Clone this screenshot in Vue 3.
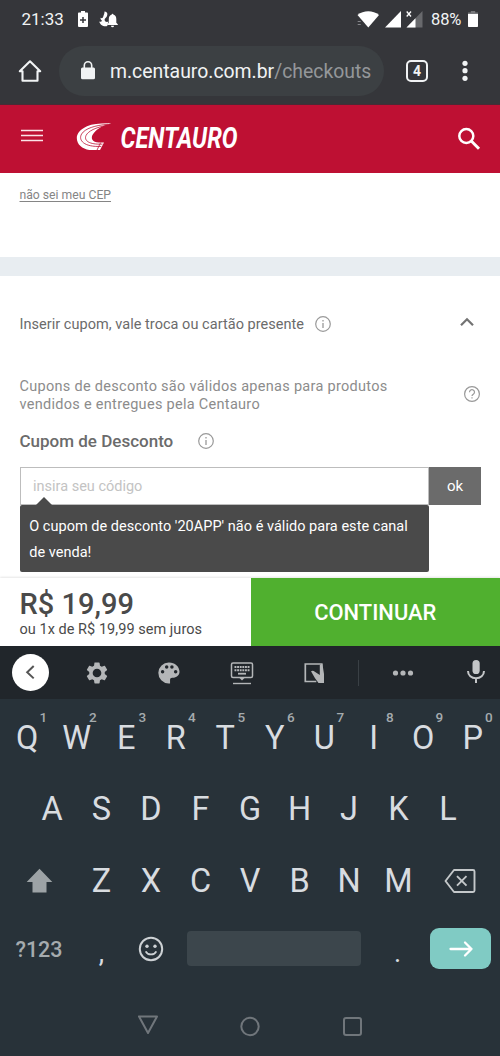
<script setup>
const row1 = 'QWERTYUIOP'.split('').map((letter, i) => ({ letter, hint: (i + 1) % 10 }))
const row2 = 'ASDFGHJKL'.split('')
const row3 = 'ZXCVBNM'.split('')
</script>

<template>
  <div class="screen">
    <div class="status">
      <span class="clock">21:33</span>
      <svg class="st-batt" width="10" height="18" viewBox="0 0 10 18">
        <path d="M3 1h4v1.6h2.2a.8.8 0 0 1 .8.8V16a1 1 0 0 1-1 1H1a1 1 0 0 1-1-1V3.400a.8.800 0 0 1 .8-.8H3z" fill="#fff" />
        <path d="M5 7v6M2 10h6" stroke="#35363a" stroke-width="1.500" />
      </svg>
      <svg class="st-bell" width="19" height="17" viewBox="0 0 19 17">
        <path d="M5.500.5C9 1 8.700 3.500 7.800 5.500 7 7 5.400 7.500 5.600 9c.2 1.800 2.200 2.400 3.800 1.600-.3 1.600-.8 3-1.200 4.400C4.500 16 .8 13.500.3 10.400c1.300.6 2.300.3 2.700-.7C2 9 1.300 8 1.600 6.800c1.400.8 2.300.2 2.600-1C4.600 4 5.600 2.600 5.500.5z" fill="#fff" />
        <path d="M13.500 2.800a1 1 0 0 1 1 1c2 .5 2.800 2.200 2.800 4.200v3.700l1.500 1.600v.7H8.300v-.7l1.500-1.600V8c0-2 .9-3.700 2.800-4.200a1 1 0 0 1 .9-1zM12 14.700h3a1.500 1.500 0 0 1-3 0z" fill="#fff" />
      </svg>
      <span class="grow"></span>
      <svg width="66" height="18" viewBox="0 0 66 18">
        <path d="M.5 5.100C6.600.100 15.900.1 22 5.100L11.300 17.500z" fill="#fff" />
        <path d="M.7 14.500h3M.7 11.500h3" stroke="#85868a" stroke-width="1.200" />
        <path d="M44 1v16.500H28z" fill="#fff" />
        <path d="M65.500 1v16.500H49.500z" fill="#68696c" />
        <path d="M58.500 8.200v9.300h-9z" fill="#fff" />
        <path d="M49.700 1.500l4.300 5M54 1.500l-4.300 5" stroke="#fff" stroke-width="1.300" />
      </svg>
      <span class="pct">88%</span>
      <svg class="st-full" width="10" height="18" viewBox="0 0 10 18">
        <path d="M2.800 1h4.400v1.500H10V5H0V2.500h2.800z" fill="#77787b" />
        <path d="M0 4h10v12.200a.8.8 0 0 1-.8.8H.8a.8.8 0 0 1-.8-.8z" fill="#fff" />
      </svg>
    </div>

    <div class="browser">
      <svg class="home" width="24" height="24" viewBox="0 0 24 24">
        <path d="M12 2.300L1.800 12.200H4.500v9.600h15v-9.600h2.700z" fill="none" stroke="#f1f3f4" stroke-width="2.100" stroke-linejoin="round" />
      </svg>
      <div class="url">
        <svg width="14" height="19" viewBox="0 0 14 19">
          <rect y="6.500" width="14" height="11.800" rx="1.500" fill="#f1f3f4" />
          <path d="M3.300 7V4.500a3.700 3.700 0 0 1 7.400 0V7" fill="none" stroke="#f1f3f4" stroke-width="1.600" />
        </svg>
        <span class="url-text">m.centauro.com.br<i>/checkouts</i></span>
      </div>
      <div class="tabs">4</div>
      <svg class="dots" width="6" height="22" viewBox="0 0 6 22">
        <g fill="#f1f3f4"><circle cx="3" cy="3.300" r="2.600" /><circle cx="3" cy="10.700" r="2.600" /><circle cx="3" cy="18.300" r="2.600" /></g>
      </svg>
    </div>

    <header class="site">
      <svg class="burger" width="24" height="14" viewBox="0 0 24 14">
        <path d="M1 1.500h22M1 6.500h22M1 11.500h22" stroke="#fbe3e8" stroke-width="1.500" />
      </svg>
      <svg class="logo" width="220" height="34" viewBox="0 0 220 34">
        <path d="M35.300 3.300C26 3 17 3.600 11 6.300 4.500 9.200.8 13.500.8 18c0 6.500 5.500 11 12.500 11.900 3.500.3 7 .1 10.700 0l4-7.400c-4 .2-8.500.200-10.500-1.500-3.500-3-1-7.500 3.500-11.200C24.500 7 29.500 5 35.300 3.300z" fill="#fff" />
        <path d="M32 4.300C19 5.300 9 8.500 5.600 14c-3.500 6 2 13.300 19.700 12.400M31 5.400C19.500 7.400 12.300 11 10 15.500c-2.200 5 3 9.300 16.500 8.600M20.800 30.500l3.800-7.800" fill="none" stroke="#be1033" stroke-width=".8" />
        <text x="44.500" y="27.700" textLength="117" lengthAdjust="spacingAndGlyphs" font-size="29.500" font-weight="700" font-style="italic" font-family="Roboto, sans-serif" fill="#fff">CENTAURO</text>
      </svg>
      <svg class="search" width="24" height="24" viewBox="0 0 24 24">
        <circle cx="9.300" cy="9" r="7" fill="none" stroke="#fff" stroke-width="2.500" />
        <path d="M14.300 14L22 21.700" stroke="#fff" stroke-width="3" />
      </svg>
    </header>

    <main>
      <div class="cep"><a>não sei meu CEP</a></div>
      <div class="band"></div>
      <section class="coupon">
        <div class="accordion">
          <span class="acc-title">Inserir cupom, vale troca ou cartão presente</span>
          <svg class="acc-info" width="18" height="18" viewBox="0 0 18 18">
            <circle cx="9" cy="9" r="7.300" fill="none" stroke="#999" stroke-width="1.200" />
            <path d="M9 5v1.600M9 8v5" stroke="#999" stroke-width="1.300" />
          </svg>
          <span class="grow"></span>
          <svg class="chevron" width="16" height="12" viewBox="0 0 16 12">
            <path d="M2 9.300L8 3.200l6 6.100" fill="none" stroke="#737373" stroke-width="2.200" />
          </svg>
        </div>
        <div class="notice">
          <p>Cupons de desconto são válidos apenas para produtos<br />vendidos e entregues pela Centauro</p>
          <svg width="18" height="18" viewBox="0 0 18 18">
            <circle cx="9" cy="9" r="7.400" fill="none" stroke="#999" stroke-width="1.200" />
            <path d="M6.500 7.200a2.500 2.500 0 1 1 3.800 2.100C9.400 9.900 9 10.200 9 11.100M9 12.200v1.400" fill="none" stroke="#999" stroke-width="1.200" />
          </svg>
        </div>
        <div class="label">
          <span>Cupom de Desconto</span>
          <svg width="18" height="18" viewBox="0 0 18 18">
            <circle cx="9" cy="9" r="7.300" fill="none" stroke="#999" stroke-width="1.200" />
            <path d="M9 5v1.600M9 8v5" stroke="#999" stroke-width="1.300" />
          </svg>
        </div>
        <div class="field">
          <div class="input">insira seu código</div>
          <div class="ok">ok</div>
        </div>
        <div class="tip">O cupom de desconto '20APP' não é válido para este canal<br />de venda!</div>
      </section>
    </main>

    <footer class="buy">
      <div class="price">
        <strong>R$ 19,99</strong>
        <span>ou 1x de R$ 19,99 sem juros</span>
      </div>
      <div class="go">CONTINUAR</div>
    </footer>

    <div class="toolbar">
      <div class="tool back">
        <svg width="37" height="37" viewBox="0 0 37 37">
          <circle cx="18.500" cy="18.500" r="18.500" fill="#fff" />
          <path d="M21.700 12l-6.500 6.200 6.500 6.200" fill="none" stroke="#555" stroke-width="2" />
        </svg>
      </div>
      <div class="tool">
        <svg width="26" height="26" viewBox="0 0 24 24">
          <path fill="#b4b6b8" fill-rule="evenodd" d="M19.140 12.940c.04-.3.060-.61.060-.94 0-.32-.02-.64-.07-.94l2.030-1.580a.49.49 0 0 0 .12-.61l-1.920-3.320a.488.488 0 0 0-.59-.22l-2.390.96c-.5-.38-1.030-.7-1.620-.94l-.36-2.540a.484.484 0 0 0-.48-.41h-3.840c-.24 0-.43.17-.47.41l-.36 2.540c-.59.24-1.130.57-1.620.94l-2.390-.96c-.22-.08-.47 0-.59.22L2.740 8.870c-.12.210-.08.470.12.610l2.030 1.580c-.05.3-.09.630-.09.940s.02.640.070.940l-2.030 1.580a.49.49 0 0 0-.12.610l1.920 3.320c.12.220.370.290.590.220l2.390-.96c.5.380 1.030.700 1.620.940l.36 2.540c.05.240.240.410.480.410h3.840c.24 0 .440-.17.470-.41l.36-2.540c.59-.24 1.130-.56 1.620-.94l2.390.96c.22.080.470 0 .590-.22l1.920-3.320c.12-.22.070-.47-.12-.61zM12 16a4 4 0 1 1 0-8 4 4 0 0 1 0 8z" />
        </svg>
      </div>
      <div class="tool">
        <svg width="28" height="28" viewBox="0 0 24 24">
          <path fill="#b4b6b8" fill-rule="evenodd" d="M12 3a9 9 0 0 0-.3 18h1.200v-3.200c0-1 .7-1.800 1.800-1.800H16c2.760 0 5-2.240 5-5 0-4.420-4.030-8-9-8zM6.500 12.500a1.500 1.500 0 1 1 0-3 1.500 1.500 0 0 1 0 3zM10 8.400a1.500 1.500 0 1 1 0-3 1.500 1.500 0 0 1 0 3zM14.500 8.400a1.500 1.500 0 1 1 0-3 1.500 1.500 0 0 1 0 3zM17.700 12.500a1.500 1.500 0 1 1 0-3 1.500 1.500 0 0 1 0 3z" />
        </svg>
      </div>
      <div class="tool">
        <svg width="24" height="24" viewBox="0 0 24 24">
          <g fill="none" stroke="#b4b6b8">
            <rect x="1.500" y="2" width="21" height="14.500" rx="1.500" stroke-width="1.500" />
            <path d="M4.500 6h15M4.500 9.200h15" stroke-width="1.900" stroke-dasharray="1.900 .72" />
            <path d="M8 12.700h8" stroke-width="1.800" />
            <path d="M3 22.500h18" stroke-width="1.400" />
          </g>
          <path d="M9.500 17h5L12 19.500z" fill="#b4b6b8" />
        </svg>
      </div>
      <div class="tool">
        <svg width="24" height="24" viewBox="0 0 24 24">
          <path d="M19.700 12V3H3.300v17.500h11" fill="none" stroke="#b4b6b8" stroke-width="1.700" />
          <path d="M9 10.300c1.300-1.200 2.700-.6 3.800.4l5 3.300V4l2.600-1.300L22 13v9h-5.500l-3.600-5z" fill="#b4b6b8" />
        </svg>
      </div>
      <div class="sep"></div>
      <div class="tool more">
        <svg width="22" height="8" viewBox="0 0 22 8">
          <g fill="#b4b6b8"><circle cx="3.500" cy="4" r="2.600" /><circle cx="11" cy="4" r="2.600" /><circle cx="18.500" cy="4" r="2.600" /></g>
        </svg>
      </div>
      <div class="tool mic">
        <svg width="20" height="26" viewBox="0 0 20 26">
          <rect x="6.500" y="1" width="7.200" height="14" rx="3.600" fill="#c4c6c8" />
          <path d="M2 12c0 4.500 3.500 7.300 8 7.300s8-2.800 8-7.300M10 19v5" fill="none" stroke="#c4c6c8" stroke-width="2" />
        </svg>
      </div>
    </div>

    <div class="keyboard">
      <div class="keys r1">
        <div v-for="k in row1" :key="k.letter" class="key">{{ k.letter }}<sup>{{ k.hint }}</sup></div>
      </div>
      <div class="keys r2">
        <div v-for="k in row2" :key="k" class="key">{{ k }}</div>
      </div>
      <div class="keys r3">
        <div class="wide">
          <svg width="28" height="26" viewBox="0 0 28 26">
            <path d="M13.500 .8L26.300 14H20.500v10.500h-14V14H.7z" fill="#9da3a6" />
          </svg>
        </div>
        <div v-for="k in row3" :key="k" class="key">{{ k }}</div>
        <div class="wide">
          <svg width="32" height="26" viewBox="0 0 32 26">
            <path d="M10 2h19a1.500 1.500 0 0 1 1.500 1.500v19A1.500 1.500 0 0 1 29 24H10L1.500 13z" fill="none" stroke="#c4c8ca" stroke-width="1.900" stroke-linejoin="round" />
            <path d="M13 8.200l9.500 9.500M22.500 8.200L13 17.700" stroke="#c4c8ca" stroke-width="1.900" />
          </svg>
        </div>
      </div>
      <div class="keys r4">
        <div class="sym">?123</div>
        <div class="punct">,</div>
        <div class="emoji">
          <svg width="26" height="26" viewBox="0 0 26 26">
            <circle cx="13" cy="13" r="11.200" fill="none" stroke="#cdd1d4" stroke-width="2" />
            <circle cx="9" cy="10.300" r="1.700" fill="#cdd1d4" /><circle cx="17" cy="10.300" r="1.700" fill="#cdd1d4" />
            <path d="M7.700 15.300c2 4.200 8.600 4.200 10.600 0" fill="none" stroke="#cdd1d4" stroke-width="1.800" />
          </svg>
        </div>
        <div class="space"></div>
        <div class="punct dot">.</div>
        <div class="enter">
          <svg width="26" height="18" viewBox="0 0 26 18">
            <path d="M2.500 9h21M17 2.500L23.500 9 17 15.500" fill="none" stroke="#fff" stroke-width="2.300" stroke-linecap="round" stroke-linejoin="round" />
          </svg>
        </div>
      </div>
      <nav class="nav">
        <svg width="22" height="22" viewBox="0 0 22 22"><path d="M2 1.500h18L11 18z" fill="none" stroke="#70767b" stroke-width="2" stroke-linejoin="round" /></svg>
        <svg width="22" height="22" viewBox="0 0 22 22"><circle cx="11" cy="11.500" r="8.700" fill="none" stroke="#70767b" stroke-width="2" /></svg>
        <svg width="22" height="22" viewBox="0 0 22 22"><rect x="3" y="3" width="17" height="17" rx="2" fill="none" stroke="#70767b" stroke-width="2" /></svg>
      </nav>
    </div>
  </div>
</template>

<style>
body { margin: 0; }
</style>

<style scoped>
.screen { width: 500px; height: 1056px; overflow: hidden; display: flex; flex-direction: column; font-family: Roboto, "Liberation Sans", sans-serif; background: #fff; }
.screen > * { flex-shrink: 0; }
svg { display: block; flex-shrink: 0; }
.grow { flex: 1; }

.status { box-sizing: border-box; height: 38px; padding: 0 22px 0 21.500px; display: flex; align-items: center; background: #35363a; color: #f1f3f4; }
.clock { width: 56.500px; font-size: 17px; line-height: 20px; white-space: nowrap; }
.st-bell { margin-left: 11px; }
.pct { margin-left: 8px; width: 32px; font-size: 16.500px; line-height: 20px; letter-spacing: -0.100px; padding-top: 1px; white-space: nowrap; }
.st-full { margin-left: 5px; }

.browser { box-sizing: border-box; height: 67px; padding: 8px 31px 9px 17.500px; display: flex; align-items: center; background: #35363a; border-bottom: 1px solid #4a2a35; }
.url { box-sizing: border-box; width: 325px; height: 50px; margin-left: 17.500px; padding-left: 22px; border-radius: 25px; background: #3c4043; display: flex; align-items: center; }
.url-text { margin-left: 15px; font-size: 19.400px; line-height: 24px; padding-top: 2px; color: #f1f3f4; white-space: nowrap; }
.url-text i { font-style: normal; color: #94979a; }
.tabs { box-sizing: border-box; width: 22px; height: 22px; margin-left: 22px; border: 2px solid #f1f3f4; border-radius: 5px; color: #f1f3f4; font-size: 14px; font-weight: 700; line-height: 18px; text-align: center; }
.dots { margin-left: 34px; }

.site { box-sizing: border-box; height: 68px; padding: 0 19px 0 20px; display: flex; align-items: center; background: #be1033; }
.burger { margin-top: -6px; }
.logo { margin-left: 32px; margin-top: -4px; }
.search { margin-left: auto; }

.cep { height: 84px; padding-left: 19.500px; box-sizing: border-box; padding-top: 14px; font-size: 12.200px; line-height: 16px; color: #858585; }
.cep a { text-decoration: underline; text-underline-offset: 2px; }
.band { height: 19px; background: #e8edf1; }
.coupon { height: 302px; box-sizing: border-box; padding: 38px 19px 0 19.500px; }
.accordion { height: 20px; display: flex; align-items: center; padding-right: 6px; }
.acc-title { font-size: 14.500px; line-height: 20px; padding-top: 2px; letter-spacing: 0.035px; color: #6b6b6b; white-space: nowrap; }
.acc-info { margin-left: 10px; }
.chevron { margin-top: -5px; }
.notice { display: flex; justify-content: space-between; align-items: center; margin-top: 44.500px; height: 34px; }
.notice svg { margin-top: -4px; }
.notice p { margin: 0; font-size: 14.500px; line-height: 17.500px; letter-spacing: 0.290px; color: #8c8c8c; white-space: nowrap; }
.label { display: flex; align-items: center; margin-top: 17.500px; height: 22px; font-size: 17px; font-weight: 500; color: #6b6b6b; }
.label svg { margin-left: 24px; }
.field { display: flex; height: 38.500px; margin-top: 14.500px; }
.input { box-sizing: border-box; width: 409.500px; border: 1px solid #bdbdbd; padding-left: 12.500px; font-size: 14.500px; line-height: 38px; color: #c3c3c3; }
.ok { flex: 1; background: #6b6b6b; color: #fff; font-size: 15px; line-height: 38px; text-align: center; }
.tip { position: relative; box-sizing: border-box; width: 409.500px; height: 67px; padding: 8.500px 0 0 9.700px; border-radius: 2px; background: #4a4a4a; color: #fff; font-size: 14.500px; line-height: 26.400px; letter-spacing: 0.030px; white-space: nowrap; }
.tip::before { content: ""; position: absolute; left: 16px; top: -8px; border: 8px solid transparent; border-top: 0; border-bottom-color: #4a4a4a; }

.buy { height: 68px; display: flex; background: #fff; box-shadow: 0 -1px 2px rgba(0, 0, 0, 0.1); position: relative; }
.price { width: 250.500px; box-sizing: border-box; padding: 9px 0 0 19.500px; color: #4a4a4a; }
.price strong { display: block; font-size: 29px; line-height: 34px; font-weight: 500; }
.price span { display: block; font-size: 14.500px; line-height: 18px; letter-spacing: 0.040px; white-space: nowrap; }
.go { flex: 1; background: #50b02f; color: #fff; font-size: 21.900px; font-weight: 500; line-height: 70px; text-align: center; }

.toolbar { height: 53px; display: flex; align-items: center; background: #21262b; }
.tool { width: 72.300px; flex-shrink: 0; display: flex; justify-content: center; }
.tool.back { width: 61px; }
.sep { width: 1px; height: 26px; margin-left: 7.500px; flex-shrink: 0; background: #3a4045; }
.tool.more { width: 89px; }
.tool.mic { width: 56px; margin-top: -2px; }

.keyboard { flex: 1; background: #283239; color: #d8dce0; }
.keys { display: flex; justify-content: center; align-items: center; }
.key { position: relative; width: 49.500px; font-size: 32.500px; line-height: 40px; text-align: center; }
.key sup { position: absolute; left: 37px; top: -8px; font-size: 13.500px; font-weight: 500; line-height: 14px; color: #a5abae; }
.r1 { height: 71px; padding-top: 3px; }
.r2 { height: 71px; }
.r3 { height: 72px; padding-top: 1px; }
.wide { width: 74px; display: flex; justify-content: center; }
.r4 { height: 63px; justify-content: flex-start; }
.sym { width: 78px; text-align: center; font-size: 21.500px; font-weight: 500; color: #a5abae; padding-top: 1px; }
.punct { width: 47px; flex-shrink: 0; text-align: center; font-size: 27px; line-height: 32px; padding-top: 9px; }
.emoji { width: 51px; display: flex; justify-content: center; }
.space { width: 174px; height: 35.500px; margin-left: 11px; border-radius: 4px; background: #3c464c; }
.punct.dot { width: 65px; padding-left: 4px; }
.enter { width: 61px; height: 41px; border-radius: 9px; background: #80cbc4; display: flex; align-items: center; justify-content: center; }
.nav { display: flex; justify-content: center; gap: 80px; margin-top: 35px; }
</style>
